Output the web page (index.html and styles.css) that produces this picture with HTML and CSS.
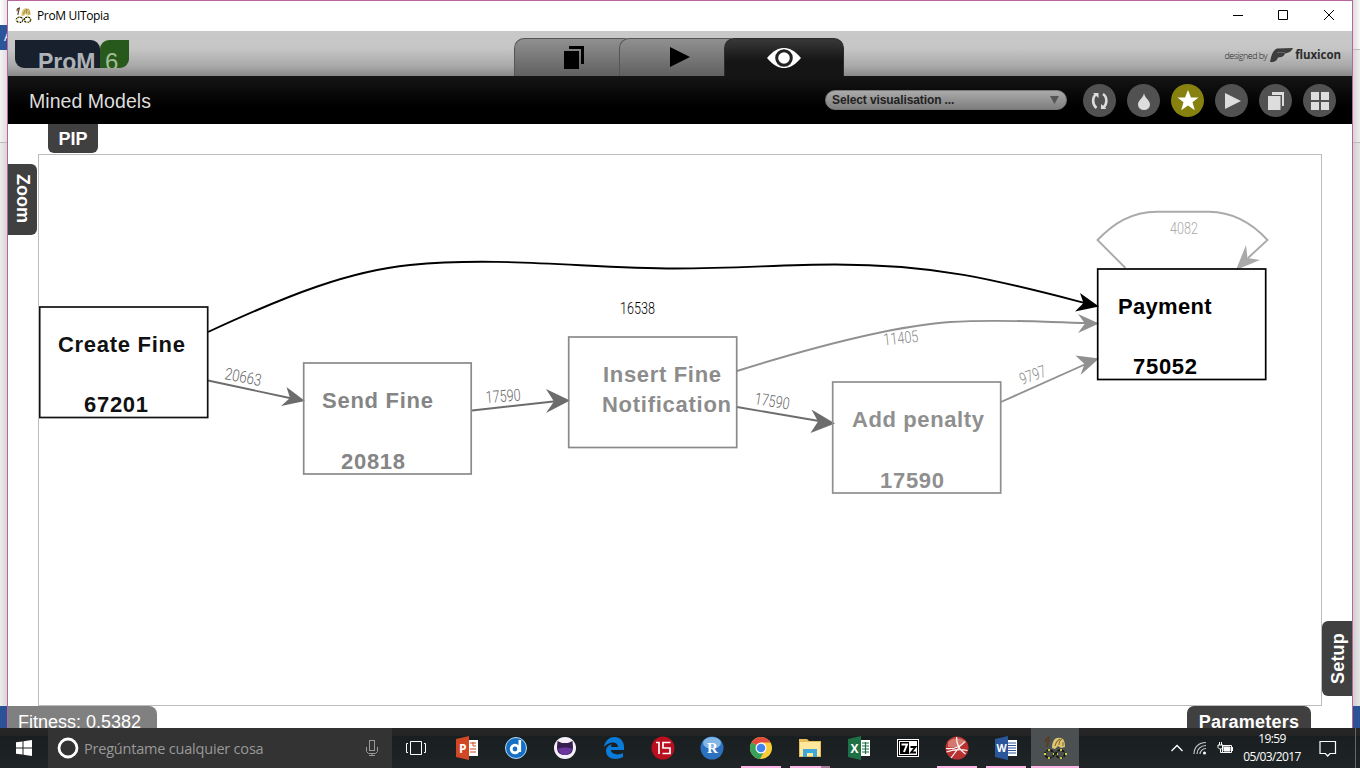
FILE: index.html
```html
<!DOCTYPE html>
<html lang="es">
<head>
<meta charset="utf-8">
<title>ProM UITopia</title>
<link rel="stylesheet" href="styles.css">
</head>
<body>
<svg width="0" height="0" class="defs">
  <defs>
    <g id="miner">
      <path d="M3 3l4-2M6 2l-2 9M3 3v3" stroke="#5b3a22" stroke-width="1.6" fill="none"/>
      <path d="M9 12c0-8 4-11 8-10 4 0 5 4 5 9l-4 1-3-2-3 3z" fill="#dcc777"/>
      <path d="M12 10c1-4 3-6 5-7M16 9c0-3 1-5 3-6M20 10V6" stroke="#8b6a2b" stroke-width="1.1" fill="none"/>
      <g fill="none" stroke="#15170c" stroke-width="1.8" stroke-dasharray="3 1"><ellipse cx="6.500" cy="18" rx="4.500" ry="3.800"/><ellipse cx="17.500" cy="18" rx="4.500" ry="3.800"/></g>
      <path d="M6 13v2M6 21v2M18 13v2M18 21v2M1 18h2M22 18h2M10 18h1M14 18h1" stroke="#d8d33a" stroke-width="1.8"/>
    </g>
  </defs>
</svg>
<div class="desk">
  <div class="strip left"><i class="s-top"></i><i class="s-blue">A</i><i class="s-mid"></i><i class="s-grey"></i><i class="s-foot"></i></div>
  <main class="window">
    <div class="titlebar">
      <svg width="17" height="17" viewBox="0 0 24 24"><use href="#miner"/></svg>
      <span class="title">ProM UITopia</span>
      <svg class="controls" width="104" height="16" fill="none" stroke="#000"><path d="M1 8.500h10M46.500 3.500h9v9h-9zM92 3l10 10M102 3L92 13"/></svg>
    </div>
    <header class="header">
      <div class="logo"><span class="logo-a">ProM</span><span class="logo-b">6</span></div>
      <nav class="tabs">
        <div class="tab first"><svg width="20" height="24"><path d="M5 0h15v18h-3V3H5z"/><path d="M0 5h15v18H0z"/></svg></div>
        <div class="tab play"><svg width="20" height="20"><path d="M0 0l20 10L0 20z"/></svg></div>
        <div class="tab on"><svg width="36" height="22" viewBox="0 0 36 22"><path d="M1 11C8 3 13 1 18 1s10 2 17 10c-7 8-12 10-17 10S8 19 1 11z" fill="#fff"/><circle cx="18" cy="11" r="7.300" fill="#fff" stroke="#222" stroke-width="3"/></svg></div>
      </nav>
      <div class="brand"><span>designed by</span>
        <svg width="25" height="17" viewBox="0 0 25 17"><path d="M1 15C2 9 4 3 8 1.500L24 1c-1 3-4 5-8 5.500-1 3-4 4-7 4-1 3-3 5-8 4.500z" fill="#3d3d3d"/><path d="M8 5.500h8" stroke="#666" fill="none"/></svg>
        <b>fluxicon</b></div>
    </header>
    <div class="toolbar">
      <h1>Mined Models</h1>
      <div class="select"><span>Select visualisation ...</span><svg width="9" height="8"><path d="M0 0h9L4.500 8z" fill="#555"/></svg></div>
      <div class="tools">
        <div class="tool"><svg width="33" height="33" fill="none" stroke="#ddd" stroke-width="2.600"><path d="M13.500 10c-4.500 3-4.500 10.500 0 14M20 24c4.500-3.500 4.500-11 0-14"/><path d="M10 9h5.500v5zM23.500 25H18v-5z" fill="#ddd" stroke="none"/></svg></div>
        <div class="tool"><svg width="33" height="33" fill="#ddd"><path d="M17 9c.5 5 6 7 6 11.500a6 5.500 0 0 1-12 0C11 16 16.500 14 17 9z"/></svg></div>
        <div class="tool gold"><svg width="33" height="33" fill="#fff"><path d="M17 6l3 7.500h7.500l-6 4.700 2.300 8-6.800-4.700-6.800 4.700 2.300-8-6-4.700H14z"/></svg></div>
        <div class="tool"><svg width="33" height="33" fill="#ddd"><path d="M10 9l16 8-16 8z"/></svg></div>
        <div class="tool"><svg width="33" height="33" fill="#ddd"><path d="M13 8h12v14h-2V11H13z"/><path d="M9 12h12.500v14H9z"/></svg></div>
        <div class="tool"><svg width="33" height="33" fill="#ddd"><path d="M8 8h8v8H8zM18 8h8v8h-8zM8 18h8v8H8zM18 18h8v8h-8z"/></svg></div>
      </div>
    </div>
    <section class="content">
      <div class="side top"><span class="flap pip">PIP</span></div>
      <div class="side west"><span class="flap zoom">Zoom</span></div>
      <div class="canvas">
        <svg class="graph" width="1282" height="550" viewBox="39 155 1282 550">
          <g class="edges">
            <path d="M208 332C290 294 350 271 410 265C500 256 590 268.500 675 268.500C740 268.500 780 264.500 835 264.500C940 264.500 1000 281 1085 303" stroke="#000"/>
            <path d="M208 380.500L292 398.500" stroke="#6c6c6c"/>
            <path d="M472 410.500L558 401" stroke="#6c6c6c"/>
            <path d="M737 407L822 421.500" stroke="#6c6c6c"/>
            <path d="M737 371C820 345 895 326 950 322C1000 319 1040 322 1088 323" stroke="#909090"/>
            <path d="M1001 402L1087 363.500" stroke="#909090"/>
            <path d="M1125.500 268L1097.500 240C1114 223 1131 212 1157 211.700H1209C1232 212 1251 222 1267.500 240L1248 258" stroke="#aaa"/>
          </g>
          <path d="M1099 306.500L1080 293l3.500 10-8.500 8.500z"/>
          <path d="M305 401L286.500 387l3.500 11-9 8z" fill="#6c6c6c"/>
          <path d="M570 400.500L546 389l8 12.500-8 11.500z" fill="#6c6c6c"/>
          <path d="M835 423.500L811.500 409.500l6.500 12-7.500 11.500z" fill="#6c6c6c"/>
          <path d="M1099 323.500L1078 314l7 9.500-7 9.500z" fill="#909090"/>
          <path d="M1099 358.500l-23.500-3 9 8.500-4 11z" fill="#909090"/>
          <path d="M1236 270l10-25 1.500 13 12.500 2z" fill="#aaa"/>
          <g class="boxes">
            <rect x="39.700" y="307" width="168" height="110.500" stroke="#111"/>
            <rect x="303.700" y="363" width="167.500" height="111" stroke="#8a8a8a"/>
            <rect x="568.700" y="337" width="168" height="110.500" stroke="#8a8a8a"/>
            <rect x="832.700" y="382" width="168" height="111" stroke="#8f8f8f"/>
            <rect x="1097.700" y="269" width="168" height="110.500" stroke="#000"/>
          </g>
          <g class="names">
            <text x="58" y="352" textLength="127" fill="#111">Create Fine</text>
            <text x="84" y="412" textLength="64" fill="#111">67201</text>
            <text x="322" y="408" textLength="111" fill="#858585">Send Fine</text>
            <text x="341" y="469" textLength="64" fill="#858585">20818</text>
            <text x="603" y="382" textLength="118" fill="#8c8c8c">Insert Fine</text>
            <text x="602" y="412" textLength="129" fill="#8c8c8c">Notification</text>
            <text x="852" y="427" textLength="132" fill="#8f8f8f">Add penalty</text>
            <text x="880" y="488" textLength="64" fill="#8f8f8f">17590</text>
            <text x="1118" y="314" textLength="93.500" fill="#000">Payment</text>
            <text x="1133" y="374" textLength="64" fill="#000">75052</text>
          </g>
          <g class="counts">
            <text x="620" y="314" textLength="35" lengthAdjust="spacingAndGlyphs" fill="#000">16538</text>
            <text transform="translate(224 379) rotate(11)" textLength="37" lengthAdjust="spacingAndGlyphs" fill="#666">20663</text>
            <text transform="translate(486 403) rotate(-4)" textLength="35" lengthAdjust="spacingAndGlyphs" fill="#666">17590</text>
            <text transform="translate(754 404) rotate(9)" textLength="35" lengthAdjust="spacingAndGlyphs" fill="#666">17590</text>
            <text transform="translate(884 345.500) rotate(-6)" textLength="35" lengthAdjust="spacingAndGlyphs" fill="#888">11405</text>
            <text transform="translate(1022 385) rotate(-20)" textLength="27" lengthAdjust="spacingAndGlyphs" fill="#888">9797</text>
            <text x="1170" y="234" textLength="28" lengthAdjust="spacingAndGlyphs" fill="#aaa">4082</text>
          </g>
        </svg>
      </div>
      <div class="side east"><span class="flap setup">Setup</span></div>
      <div class="side bottom"><span class="flap fitness">Fitness: 0.5382</span><span class="flap params">Parameters</span></div>
    </section>
  </main>
  <div class="strip right"><i class="s-top"></i><i class="s-mid"></i><i class="s-grey"></i><i class="s-foot"></i></div>
</div>
<footer class="taskbar">
  <div class="start"><svg width="16" height="16" fill="#fff"><path d="M0 2.300L6.500 1.400v6.100H0zM7.500 1.200L16 0v7.500H7.500zM0 8.500h6.500v6.100L0 13.700zM7.500 8.500H16V16l-8.500-1.200z"/></svg></div>
  <div class="search"><svg width="22" height="22"><circle cx="11" cy="11" r="9" fill="none" stroke="#fff" stroke-width="2.800"/></svg><span>Pregúntame cualquier cosa</span>
    <svg width="12" height="18" fill="none" stroke="#999"><rect x="3.500" y="1.500" width="5" height="10"/><path d="M.5 8v4.500l2 2h7l2-2V8M6 14v3M3 16.500h6"/></svg></div>
  <div class="apps">
    <div class="app first"><svg width="24" height="24" fill="none" stroke="#fff"><path d="M6.500 5.500h11v13h-11zM4 7.500H2.500v9H4M20 7.500h1.500v9H20"/></svg></div>
    <div class="app"><svg width="24" height="24"><path d="M12 4h11v16H12z" fill="#fff"/><path d="M15 7h6M15 13h6M15 16h6M18 6v4h3" stroke="#d24726" fill="none"/><path d="M1 3l13-3v24L1 21z" fill="#d24726"/><text x="4" y="17" class="ic" font-size="12">P</text></svg></div>
    <div class="app"><svg width="24" height="24"><circle cx="12" cy="12" r="10.500" fill="#156fc4" stroke="#b9dcf5"/><circle cx="11" cy="13" r="3.800" fill="none" stroke="#fff" stroke-width="2.800"/><path d="M15.800 4v12" stroke="#fff" stroke-width="2.600"/></svg></div>
    <div class="app"><svg width="24" height="24"><circle cx="12" cy="12" r="11" fill="#f4f0f8"/><path d="M4.500 5l4.500 2h6l4.500-2 .5 6c0 6-3 8-8 8s-8-2-8-8z" fill="#35204f"/><path d="M5 13c2-2 12-2 14 0-1 4-4 6-7 6s-6-2-7-6z" fill="#6b35a0"/></svg></div>
    <div class="app"><svg width="24" height="24"><path d="M2 11C3 4 8 1 12.500 1 18 1 22 5 22 11v3H9c0 4 7 6 12 3v4c-7 4-17 2-17-6 0-4 3-6 6-7-1 1-1 2-1 3h7c0-6-9-6-14 0z" fill="#0a7bd8"/></svg></div>
    <div class="app"><svg width="24" height="24"><circle cx="12" cy="12" r="11.500" fill="#b90f1f"/><path d="M5 6.500h3V18M19.500 6.500H12V12h7v5.500h-7.500" stroke="#fff" stroke-width="1.700" fill="none"/></svg></div>
    <div class="app"><svg width="24" height="24"><circle cx="12" cy="12" r="11.500" fill="#2c71c0"/><ellipse cx="12" cy="7" rx="9" ry="6" fill="#83b5e6"/><text x="7" y="17" class="ic serif" font-size="15">R</text></svg></div>
    <div class="app run"><svg width="24" height="24"><circle cx="12" cy="12" r="11" fill="#f8cc3a"/><path d="M12 12L2.500 6.500A11 11 0 0 1 21.500 6.500H12z" fill="#e14a3c"/><path d="M12 12l-9.500-5.500A11 11 0 0 0 11 23l5-9z" fill="#38a25a"/><circle cx="12" cy="12" r="5.500" fill="#fff"/><circle cx="12" cy="12" r="4.300" fill="#4283ed"/></svg></div>
    <div class="app run multi"><svg width="24" height="24"><path d="M1 3h8l2 2h12v16H1z" fill="#e6bb58"/><path d="M2 6h20v14H2z" fill="#ffe79b"/><path d="M5 21v-8h14v8h-4v-4H9v4z" fill="#3ea8dc"/></svg></div>
    <div class="app"><svg width="24" height="24"><path d="M12 4h11v16H12z" fill="#fff"/><path d="M15 7h7M15 10h7M15 13h7M15 16h7M18.500 6v12" stroke="#1e7145" stroke-width="1.200"/><path d="M1 3l13-3v24L1 21z" fill="#1e7145"/><text x="3.500" y="16.500" class="ic" font-size="12">X</text></svg></div>
    <div class="app"><svg width="24" height="24"><rect x="1" y="3" width="22" height="18" fill="#fff"/><rect x="2.500" y="4.500" width="19" height="15" fill="#fff" stroke="#000"/><path d="M4 6h9v12H4z"/><path d="M5.500 8.500h5.500L8 16" stroke="#fff" stroke-width="2" fill="none"/><path d="M14.500 11h5l-4.500 5.500h5" stroke="#000" stroke-width="1.800" fill="none"/></svg></div>
    <div class="app run"><svg width="24" height="24"><circle cx="12" cy="12" r="11.500" fill="#b83232"/><path d="M3 6a11 9 0 0 1 18 0c-5 5-12 6-18 5z" fill="#d4786f"/><path d="M1 12.500c9 1 15-2 19-7M11.500 1c0 8 4 14 9 17M15.500 9.500L6 22M1.500 16c7-2.500 14-3 21-1.500" stroke="#fff" stroke-width="1.200" fill="none"/></svg></div>
    <div class="app run"><svg width="24" height="24"><path d="M12 4h11v16H12z" fill="#fff"/><path d="M14 7h8M14 9.500h8M14 12h8M14 14.500h8M14 17h8" stroke="#2b579a"/><path d="M1 3l13-3v24L1 21z" fill="#2b579a"/><text x="2.500" y="16" class="ic" font-size="10.500">W</text></svg></div>
    <div class="app run active"><svg width="24" height="24"><use href="#miner"/></svg></div>
  </div>
  <div class="tray">
    <svg width="12" height="8" fill="none" stroke="#fff" stroke-width="1.300"><path d="M.5 7L6 1.500 11.500 7"/></svg>
    <svg width="14" height="14" fill="none" stroke="#ccc"><path d="M1 13C1 6 6 1.500 13 1.500M4 13c0-5 4-8.500 9-8.500M7 13c0-3 3-5.500 6-5.500" stroke-width="1.200"/><circle cx="11.500" cy="12" r="1.500" fill="#fff" stroke="none"/></svg>
    <svg width="17" height="13" fill="none" stroke="#fff"><path d="M5.500 3.500h9v7h-9zM15.500 5v4M1 3h5v2.500L4.500 7h-2L1 5.500zM2.500 0v3M4.500 0v3M3.500 7v3.500h2"/><path d="M7 5h6v4H7z" fill="#fff"/></svg>
    <div class="clock"><span>19:59</span><span>05/03/2017</span></div>
    <svg class="note" width="18" height="17" fill="none" stroke="#fff" stroke-width="1.200"><path d="M1 1.500h15.500v12H11L8.700 16l-2.300-2.500H1z"/></svg>
    <i class="peek"></i>
  </div>
</footer>
</body>
</html>
```
FILE: styles.css
```css
* { box-sizing: border-box; }
body {
  margin: 0; width: 1360px; height: 768px; overflow: hidden;
  display: flex; flex-direction: column; background: #fff;
  font-family: "Liberation Sans", Arial, sans-serif;
}
svg { display: block; flex: none; }
.defs { position: absolute; }
.desk { display: flex; height: 728px; }

/* Slivers of the window behind */
.strip { width: 7px; display: flex; flex-direction: column; overflow: hidden; }
.strip i { display: block; font-style: normal; }
.left .s-top { height: 25px; background: linear-gradient(90deg, #fff, #e5e5e5); }
.s-blue { height: 25px; background: #2a5699; color: #fff; font-size: 12px; line-height: 25px; padding-left: 4px; }
.left .s-mid { height: 93px; background: linear-gradient(90deg, #f3f3f3, #ddd); border-bottom: 1px solid #bbb; }
.s-grey { flex: 1; background: linear-gradient(90deg, #ececec, #d6d6d6); }
.s-foot { height: 22px; background: #2a5295; }
.right .s-top { height: 50px; background: linear-gradient(90deg, #ddd, #fafafa); border-bottom: 1px solid #bbb; }
.right .s-mid { height: 93px; background: linear-gradient(90deg, #d5d5d5, #eee); border-bottom: 1px solid #bbb; }
.right .s-grey { background: linear-gradient(90deg, #cfcfcf, #e6e6e6); }

.window { flex: 1; display: flex; flex-direction: column; border: 1px solid #b9639f; border-bottom: 0; background: #fff; }
.titlebar { height: 30px; display: flex; align-items: center; padding: 0 16px 2px 7px; }
.title { margin-left: 5px; font: 12px "Open Sans", "Noto Sans", sans-serif; color: #000; letter-spacing: -.35px; }
.controls { margin-left: auto; }

.header {
  height: 45px; display: grid; grid-template-columns: 506px 330px 1fr;
  background: linear-gradient(#c9c9c9 0, #c6c6c6 38%, #a9a9a9 78%, #888 100%);
}
.logo { display: flex; height: 28px; margin: 9px 0 0 7px; overflow: hidden; color: #aeb3b8; }
.logo-a {
  width: 85px; padding: 9px 0 0 23px; background: #18202d; border-radius: 0 9px 0 9px;
  font-size: 23px; font-weight: bold; line-height: 26px;
}
.logo-b {
  width: 29px; padding: 8px 0 0 5px; background: #28591c; color: #a2bd98;
  border-radius: 9px 0 9px 0; font: 24px/28px "Liberation Sans", sans-serif;
}
.tabs { display: flex; align-self: end; height: 38px; }
.tab {
  width: 120px; margin-right: -15px; display: flex; justify-content: center; padding-top: 7px;
  background: linear-gradient(#909090, #606060); border: 1px solid #555; border-bottom: 0; border-radius: 10px 10px 0 0;
}
.tab.first { padding-right: 1px; }
.tab.play { padding-top: 8px; padding-left: 2px; }
.tab.on { margin-right: 0; padding-top: 8px; background: linear-gradient(#383838, #151515 60%); border-color: #2b2b2b; }
.brand { display: flex; align-items: center; justify-content: flex-end; padding: 4px 11px 0 0; height: 45px; }
.brand span { font: 300 9px "Open Sans", sans-serif; color: #222; margin-right: 2px; letter-spacing: -.55px; white-space: nowrap; }
.brand b { font: 700 11.500px "Open Sans", sans-serif; color: #2c2c2c; margin-left: 1px; padding-bottom: 3px; letter-spacing: -.05px; }

.toolbar { height: 48px; display: flex; align-items: center; background: linear-gradient(#151515, #000 65%); padding: 0 16px 0 21px; }
h1 { margin: 0; flex: 1; font-size: 19.500px; font-weight: normal; color: #ddd; letter-spacing: .05px; padding-top: 2px; }
.select {
  width: 242px; height: 20px; border-radius: 10px; margin-right: 16px; padding: 0 7px 0 6px;
  display: flex; align-items: center; justify-content: space-between;
  background: linear-gradient(#aaa, #7e7e7e); border: 1px solid #777;
  font-size: 12px; font-weight: bold; color: #222; letter-spacing: -.1px;
}
.tools { display: flex; gap: 11px; }
.tool { width: 33px; height: 33px; border-radius: 50%; background: #515151; }
.tool.gold { background: #87820f; }

.content {
  flex: 1; display: grid; grid-template-columns: 30px 1284px 30px; grid-template-rows: 30px 552px 22px;
}
.side { display: flex; }
.top, .bottom { grid-column: 1 / -1; }
.bottom { justify-content: space-between; }
.canvas { border: 1px solid #bcbcbc; }
.flap { display: flex; align-items: center; justify-content: center; background: #404040; color: #fff; font-size: 18px; font-weight: bold; }
.pip { width: 50px; height: 29px; padding-top: 2px; margin-left: 40px; border-radius: 0 0 6px 6px; }
.zoom { width: 29px; height: 71px; margin-top: 10px; padding: 0 1px 3px 0; writing-mode: vertical-rl; border-radius: 0 6px 6px 0; }
.east { align-items: flex-end; }
.setup { width: 30px; height: 75px; margin-bottom: 10px; padding-right: 2px; writing-mode: vertical-rl; transform: rotate(180deg); border-radius: 0 6px 6px 0; letter-spacing: .2px; }
.fitness { width: 149px; height: 30px; padding: 2px 6px 0 0; background: #808080; font-weight: normal; border-radius: 0 8px 0 0; }
.params { width: 124px; height: 30px; padding-top: 2px; margin-right: 41px; border-radius: 7px 7px 0 0; letter-spacing: .25px; }

.edges { fill: none; stroke-width: 1.900; }
.boxes { fill: none; stroke-width: 1.700; }
.names { font-size: 22px; font-weight: bold; }
.counts { font-family: Roboto, sans-serif; font-weight: 300; font-size: 16.500px; }

.taskbar { height: 40px; position: relative; display: flex; background: linear-gradient(#262626 0, #242424 8px, #191f20 8px, #1f2526 100%); }
.start { width: 48px; display: flex; align-items: center; justify-content: center; }
.search { width: 344px; display: flex; align-items: center; background: #333; padding: 0 14px 0 9px; }
.search span { flex: 1; margin-left: 5px; font: 14.500px "Open Sans", "Noto Sans", sans-serif; color: #999; white-space: nowrap; letter-spacing: -.2px; }
.apps { display: flex; }
.app { width: 49px; height: 40px; display: flex; align-items: center; justify-content: center; }
.app.first { width: 50px; padding-right: 2px; }
.run { background: linear-gradient(#ffb5e6, #ffb5e6) 50% 100% / 40px 2px no-repeat; }
.multi { background: linear-gradient(90deg, #ffb5e6 31px, #a77b98 31px) 50% 100% / 40px 2px no-repeat; }
.active { width: 48px; margin-left: 1px; background: linear-gradient(#ffb5e6, #ffb5e6) 0 100% / 100% 2px no-repeat #4c5051; }
.ic { font-family: "Open Sans", sans-serif; font-weight: bold; fill: #fff; }
.serif { font-family: "Liberation Serif", serif; }
.tray { flex: 1; display: flex; align-items: center; padding-right: 4px; justify-content: flex-end; gap: 10px; color: #fff; }
.clock { width: 60px; display: flex; flex-direction: column; align-items: center; font: 12px/18px "Open Sans", "Noto Sans", sans-serif; letter-spacing: -.6px; margin: 0 7px 0 -2px; }
.note { margin-right: 8px; }
.peek { width: 1px; height: 40px; background: #666; }
```
